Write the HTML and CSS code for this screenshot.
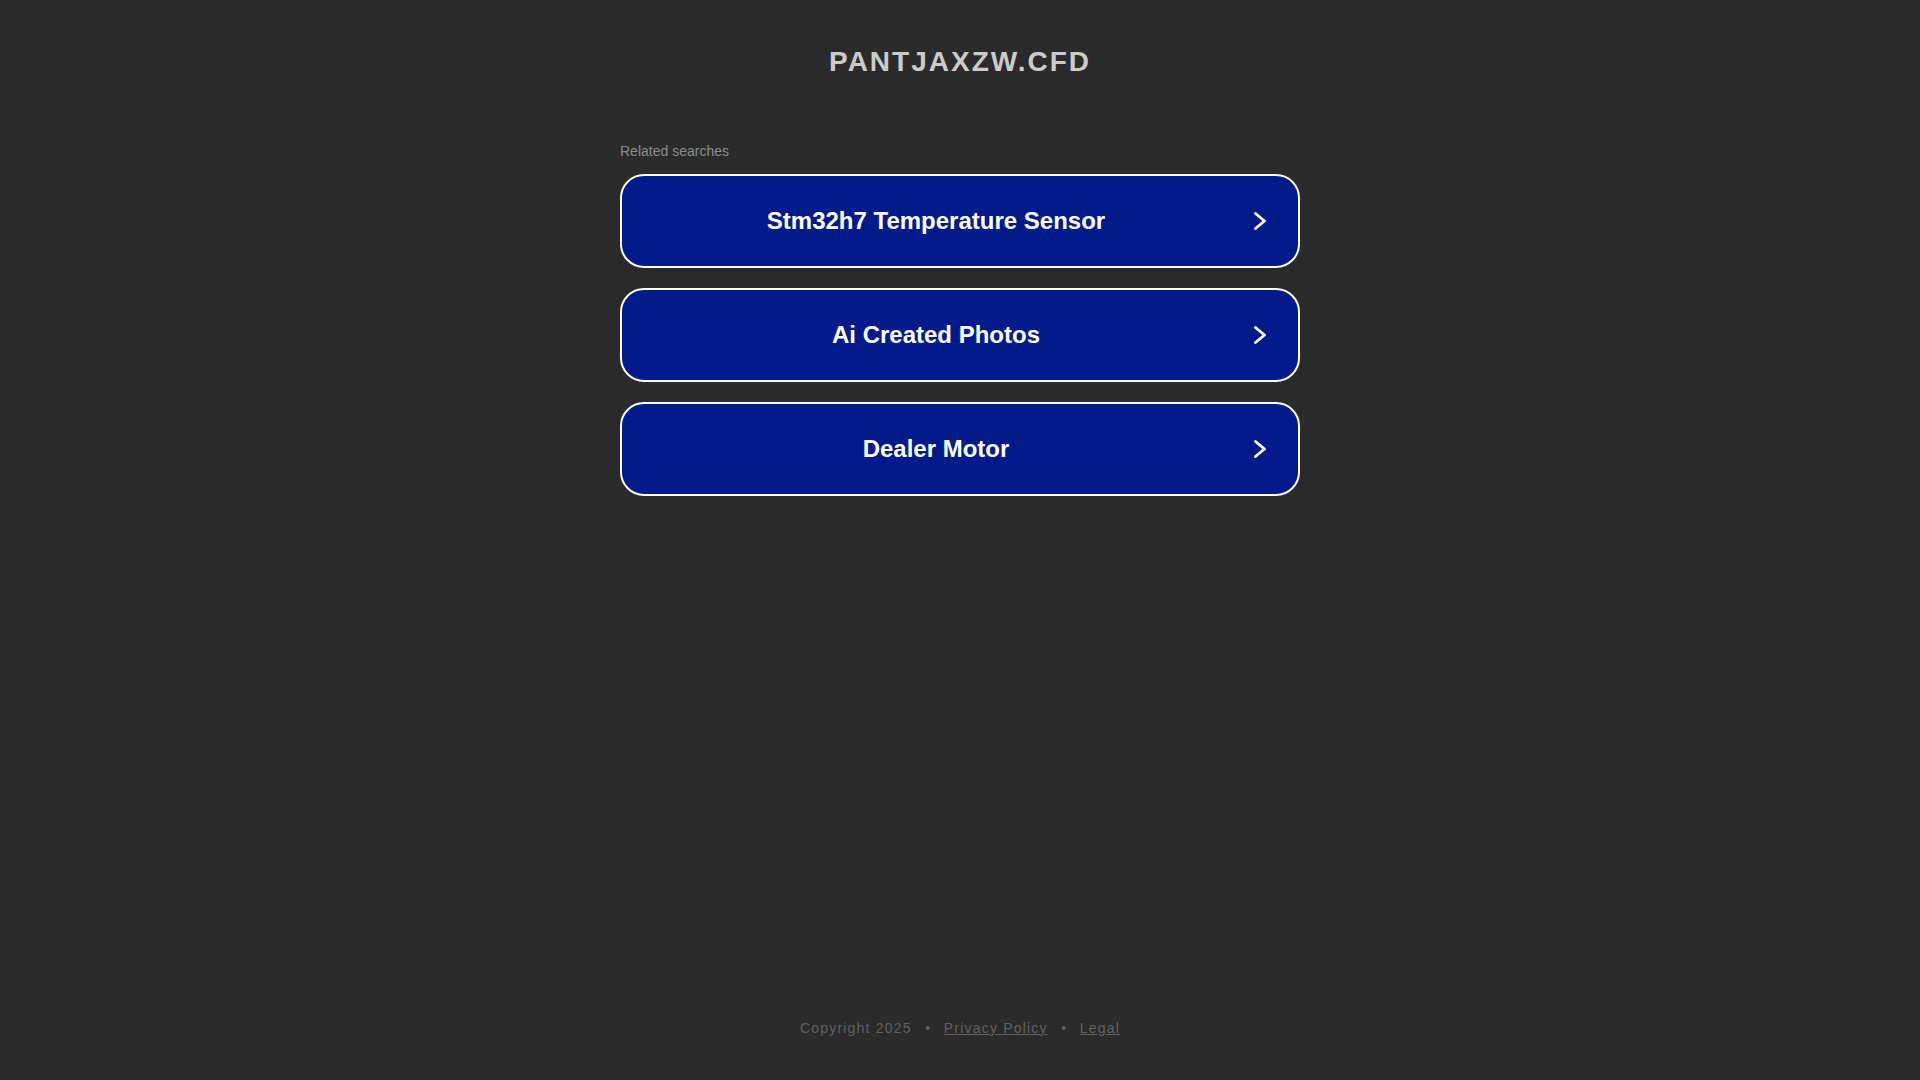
FILE: index.html
```html
<!DOCTYPE html>
<html lang="en">
<head>
<meta charset="utf-8">
<title>pantjaxzw.cfd</title>
<link rel="stylesheet" href="styles.css">
</head>
<body>
<div class="page">
  <header class="header">
    <h1 class="domain">PANTJAXZW.CFD</h1>
  </header>
  <main class="main">
    <div class="related">Related searches</div>
    <div class="list">
      <a class="btn" href="#"><span class="btn-text">Stm32h7 Temperature Sensor</span><svg class="chev" width="12" height="18" viewBox="0 0 12 18"><polyline points="1.5,1.5 10.5,9 1.5,16.5" fill="none" stroke="#fff" stroke-width="2.8" stroke-linecap="round" stroke-linejoin="round"/></svg></a>
      <a class="btn" href="#"><span class="btn-text">Ai Created Photos</span><svg class="chev" width="12" height="18" viewBox="0 0 12 18"><polyline points="1.5,1.5 10.5,9 1.5,16.5" fill="none" stroke="#fff" stroke-width="2.8" stroke-linecap="round" stroke-linejoin="round"/></svg></a>
      <a class="btn" href="#"><span class="btn-text">Dealer Motor</span><svg class="chev" width="12" height="18" viewBox="0 0 12 18"><polyline points="1.5,1.5 10.5,9 1.5,16.5" fill="none" stroke="#fff" stroke-width="2.8" stroke-linecap="round" stroke-linejoin="round"/></svg></a>
    </div>
  </main>
  <footer class="footer">
    <span>Copyright 2025</span><span class="dot">•</span><a class="flink" href="#">Privacy Policy</a><span class="dot">•</span><a class="flink" href="#">Legal</a>
  </footer>
</div>
</body>
</html>
```

FILE: styles.css
```css
html, body {
  margin: 0;
  padding: 0;
  background: #2b2b2b;
  font-family: "Liberation Sans", Arial, sans-serif;
}

.page {
  min-height: 100vh;
  display: flex;
  flex-direction: column;
}

.header {
  padding-top: 46px;
  text-align: center;
}

.domain {
  margin: 0;
  font-size: 28px;
  line-height: 32px;
  font-weight: bold;
  letter-spacing: 2px;
  color: #cbcbcb;
}

.main {
  width: 680px;
  margin: 65px auto 0;
}

.related {
  font-size: 14px;
  line-height: 16px;
  color: #8c8c8c;
  margin-bottom: 15px;
}

.list {
  display: flex;
  flex-direction: column;
  gap: 20px;
}

.btn {
  box-sizing: border-box;
  height: 94px;
  display: flex;
  align-items: center;
  background: #021a8a;
  border: 2px solid #ffffff;
  border-radius: 24px;
  padding-right: 32px;
  text-decoration: none;
  color: #ffffff;
}

.btn-text {
  flex: 1;
  text-align: center;
  font-size: 24px;
  font-weight: bold;
  line-height: 28px;
}

.chev {
  display: block;
  margin-left: 4px;
  flex: none;
}

.footer {
  margin-top: auto;
  padding-bottom: 44px;
  text-align: center;
  font-size: 14px;
  line-height: 16px;
  letter-spacing: 1.2px;
  color: #626262;
}

.dot {
  margin: 0 12.5px 0 13.5px;
}

.flink {
  color: #626262;
  text-decoration: underline;
}
```
